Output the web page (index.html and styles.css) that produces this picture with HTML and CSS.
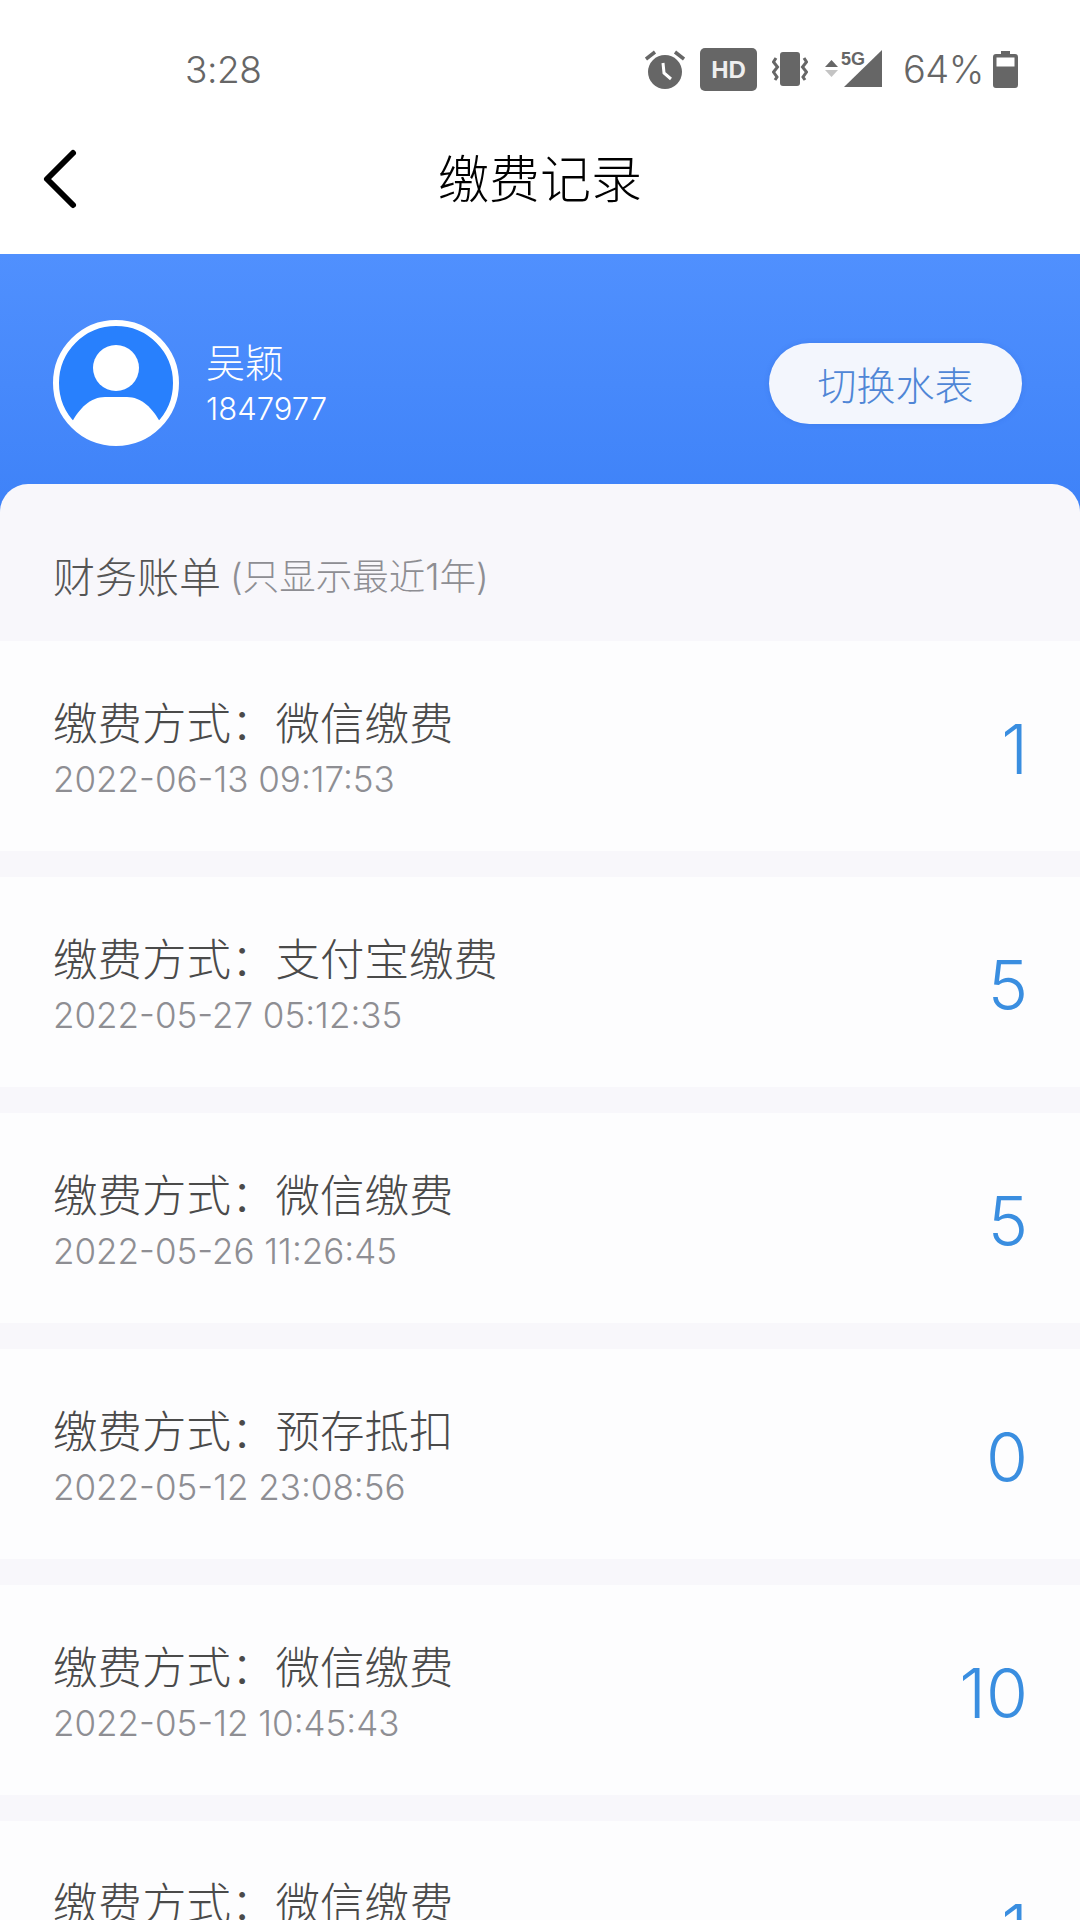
FILE: index.html
```html
<!DOCTYPE html>
<html lang="zh-CN">
	<head>
		<meta charset="utf-8">
		<meta name="viewport" content="width=device-width, initial-scale=1">
		<title>缴费记录</title>
		<link rel="stylesheet" href="styles.css">
	</head>
	<body>
		<div class="status-bar">
			<span class="time">3:28</span>
			<div class="status-icons">
				<svg class="ic-alarm" width="40" height="40" viewBox="0 0 40 40">
					<path d="M1 10 L10 3 M39 10 L30 3" stroke="#666" stroke-width="3.5" fill="none"/>
					<circle cx="20" cy="23" r="17" fill="#666"/>
					<path d="M18 14 L19 24 L26 30" stroke="#fff" stroke-width="3" fill="none"/>
				</svg>
				<span class="hd">HD</span>
				<svg class="ic-vibrate" width="36" height="34" viewBox="0 0 36 34">
					<rect x="8" y="0" width="20" height="34" rx="3" fill="#666"/>
					<path d="M4 6 L1.500 10 L5.500 15 L1.500 20 L5 25 L3 28 M32 6 L34.500 10 L30.500 15 L34.500 20 L31 25 L33 28" stroke="#666" stroke-width="3" fill="none"/>
				</svg>
				<svg class="ic-net" width="57" height="38" viewBox="0 0 57 38">
					<path d="M0 17 L6.500 10 L13 17 Z" fill="#666"/>
					<path d="M0 20 L13 20 L6.500 27 Z" fill="#c4c4c4"/>
					<path d="M57 0 L57 37 L19 37 Z" fill="#666"/>
					<text class="net-label" x="16" y="15">5G</text>
				</svg>
				<span class="battery-text">64%</span>
				<svg class="ic-battery" width="25" height="37" viewBox="0 0 25 37">
					<path d="M8 0 H17 V3 H22 Q25 3 25 6 V34 Q25 37 22 37 H3 Q0 37 0 34 V6 Q0 3 3 3 H8 Z" fill="#666"/>
					<rect x="3.500" y="6.500" width="18" height="9" fill="#fff"/>
				</svg>
			</div>
		</div>

		<div class="nav-bar">
			<svg class="nav-back" width="40" height="64" viewBox="0 0 40 64">
				<path d="M33 6 L7 32 L33 58" stroke="#000" stroke-width="6" stroke-linecap="round" stroke-linejoin="round" fill="none"/>
			</svg>
			<h1 class="nav-title">缴费记录</h1>
		</div>

		<div class="hero">
			<svg class="avatar" width="126" height="126" viewBox="0 0 126 126">
				<defs>
					<clipPath id="avatarClip"><circle cx="63" cy="63" r="60"/></clipPath>
				</defs>
				<circle cx="63" cy="63" r="60" fill="#2880fd" stroke="#fff" stroke-width="6"/>
				<circle cx="63" cy="48" r="23" fill="#fff"/>
				<path d="M18 104 C26 88 38 77 52 77 H74 C88 77 100 88 108 104 L108 126 H18 Z" fill="#fff" clip-path="url(#avatarClip)"/>
			</svg>
			<div class="user">
				<div class="user-name">吴颖</div>
				<div class="user-no">1847977</div>
			</div>
			<button class="switch-btn">切换水表</button>
		</div>

		<div class="panel">
			<div class="panel-head">财务账单 <small>(只显示最近1年)</small></div>
			<ul class="records">
				<li class="record">
					<div>
						<div class="record-title">缴费方式：微信缴费</div>
						<div class="record-date">2022-06-13 09:17:53</div>
					</div>
					<span class="record-amount">1</span>
				</li>
				<li class="record">
					<div>
						<div class="record-title">缴费方式：支付宝缴费</div>
						<div class="record-date">2022-05-27 05:12:35</div>
					</div>
					<span class="record-amount">5</span>
				</li>
				<li class="record">
					<div>
						<div class="record-title">缴费方式：微信缴费</div>
						<div class="record-date">2022-05-26 11:26:45</div>
					</div>
					<span class="record-amount">5</span>
				</li>
				<li class="record">
					<div>
						<div class="record-title">缴费方式：预存抵扣</div>
						<div class="record-date">2022-05-12 23:08:56</div>
					</div>
					<span class="record-amount">0</span>
				</li>
				<li class="record">
					<div>
						<div class="record-title">缴费方式：微信缴费</div>
						<div class="record-date">2022-05-12 10:45:43</div>
					</div>
					<span class="record-amount">10</span>
				</li>
				<li class="record">
					<div>
						<div class="record-title">缴费方式：微信缴费</div>
						<div class="record-date"></div>
					</div>
					<span class="record-amount">1</span>
				</li>
			</ul>
		</div>
	</body>
</html>
```

FILE: styles.css
```css
* {
	box-sizing: border-box;
}

html,
body {
	margin: 0;
	height: 1920px;
	overflow: hidden;
	background: #fff;
	font-family: Inter, "Noto Sans CJK SC", sans-serif;
}

/* status bar */
.status-bar {
	display: flex;
	align-items: center;
	justify-content: space-between;
	height: 110px;
	padding: 28px 62px 0 185px;
	color: #666;
}

.time {
	font-size: 37px;
	font-weight: 300;
	letter-spacing: -0.4px;
}

.status-icons {
	display: flex;
	align-items: center;
}

.hd {
	width: 57px;
	height: 43px;
	margin: 0 15px;
	border-radius: 5px;
	background: #666;
	color: #eee;
	font-family: "Liberation Sans", sans-serif;
	font-size: 24px;
	font-weight: bold;
	line-height: 43px;
	text-align: center;
}

.ic-net {
	margin-left: 17px;
}

.net-label {
	fill: #666;
	font-family: "Liberation Sans", sans-serif;
	font-size: 18px;
	font-weight: bold;
}

.battery-text {
	width: 80px;
	margin: 0 10px 0 21px;
	font-size: 38px;
	font-weight: 300;
	letter-spacing: -0.5px;
	white-space: nowrap;
}

/* nav */
.nav-bar {
	position: relative;
	display: flex;
	align-items: center;
	justify-content: center;
	height: 144px;
	padding-bottom: 12px;
}

.nav-back {
	position: absolute;
	left: 40px;
	top: 37px;
}

.nav-title {
	margin: 0;
	color: #000;
	font-size: 51px;
	font-weight: 300;
}

/* blue header */
.hero {
	display: flex;
	align-items: center;
	height: 260px;
	padding: 0 58px 2px 53px;
	background: linear-gradient(#5090fe, #3e82f8);
}

.user {
	flex: 1;
	margin-left: 27px;
	color: #fff;
}

.user-name {
	font-size: 39px;
	font-weight: 300;
	line-height: 52px;
}

.user-no {
	font-size: 31px;
	font-weight: 300;
	line-height: 40px;
}

.switch-btn {
	width: 253px;
	height: 81px;
	padding: 0;
	border: 0;
	border-radius: 41px;
	background: #f3f6fd;
	box-shadow: 0 0 5px rgba(40, 90, 190, 0.25);
	color: #4f86d6;
	font-family: inherit;
	font-size: 39px;
	font-weight: 300;
}

/* list */
.panel {
	margin-top: -30px;
	border-radius: 28px 28px 0 0;
	background: #f8f7fb;
}

.panel-head {
	display: flex;
	align-items: center;
	gap: 9px;
	height: 157px;
	padding: 23px 0 0 53px;
	color: #555;
	font-size: 42px;
	font-weight: 300;
}

.panel-head small {
	color: #8e8e93;
	font-size: 36.5px;
}

.records {
	display: flex;
	flex-direction: column;
	gap: 26px;
	margin: 0;
	padding: 0;
	list-style: none;
}

.record {
	display: flex;
	align-items: center;
	justify-content: space-between;
	height: 210px;
	padding: 6px 52px 0 53px;
	background: #fdfdfe;
}

.record-title {
	color: #4a4a4a;
	font-size: 44.5px;
	font-weight: 300;
	line-height: 60px;
}

.record-date {
	height: 50px;
	color: #8e8e93;
	font-size: 35px;
	font-weight: 300;
	line-height: 50px;
}

.record-amount {
	color: #3a8ee0;
	font-size: 68px;
	font-weight: 300;
}
```
